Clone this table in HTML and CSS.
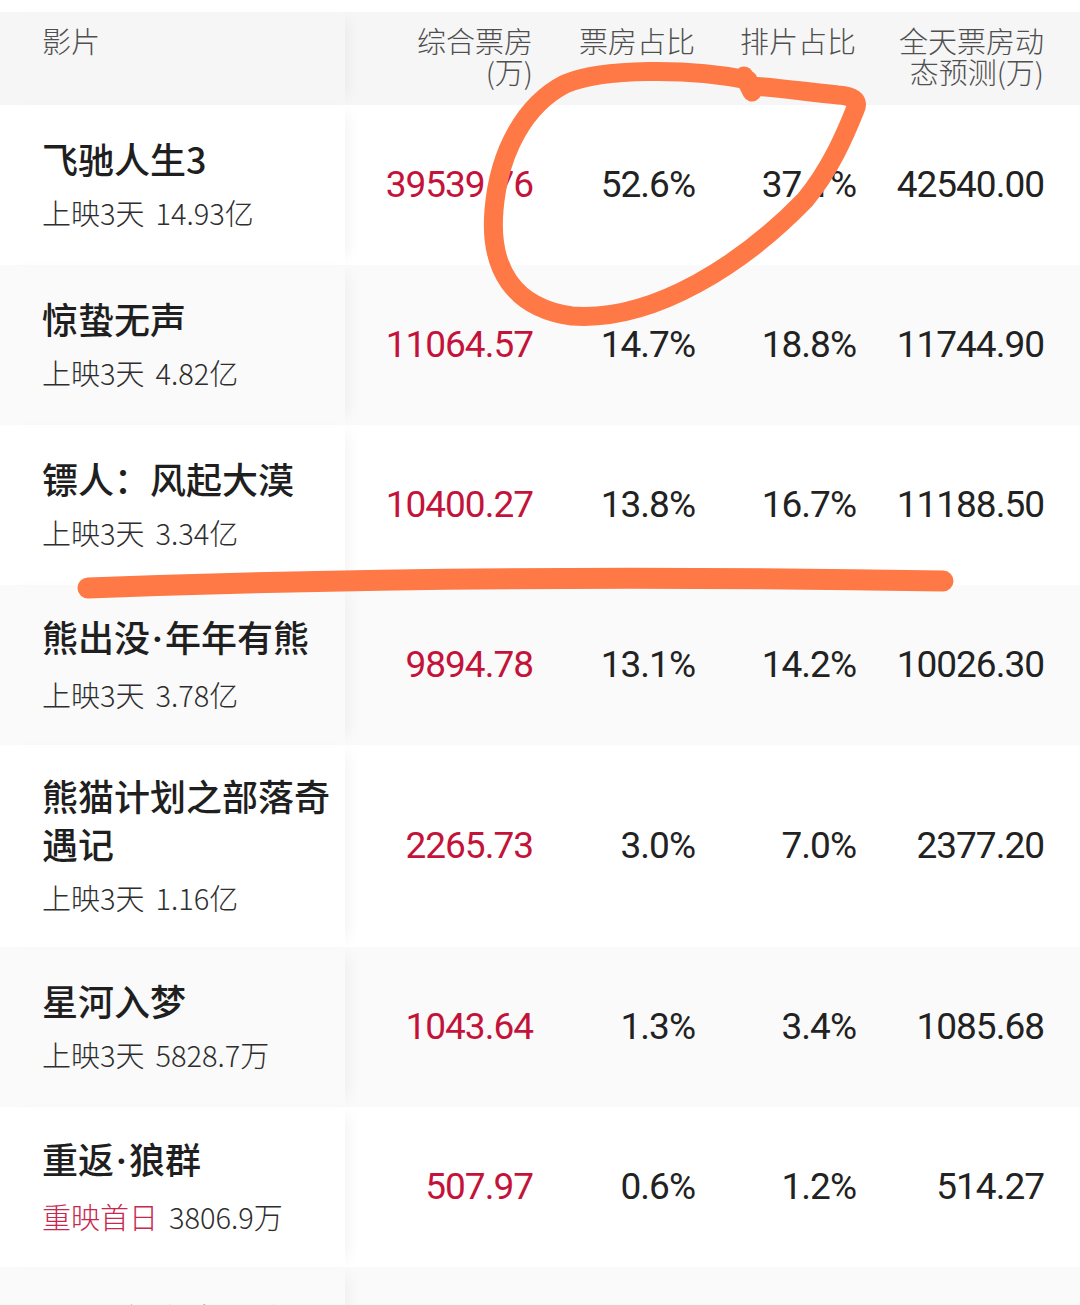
FILE: index.html
```html
<!DOCTYPE html>
<html lang="zh-CN">
<head>
<meta charset="utf-8">
<title>票房</title>
<link rel="stylesheet" href="styles.css">
</head>
<body>
<div class="board">
  <div class="row head">
    <div class="film">影片</div>
    <div class="hcell">综合票房<br>(万)</div>
    <div class="hcell">票房占比</div>
    <div class="hcell">排片占比</div>
    <div class="hcell">全天票房动<br>态预测(万)</div>
  </div>

  <div class="row">
    <div class="film"><div class="title">飞驰人生3</div><div class="sub"><span>上映3天</span><span>14.93亿</span></div></div>
    <div class="num red">39539.76</div>
    <div class="num">52.6%</div>
    <div class="num">37.1%</div>
    <div class="num">42540.00</div>
  </div>

  <div class="row alt">
    <div class="film"><div class="title">惊蛰无声</div><div class="sub"><span>上映3天</span><span>4.82亿</span></div></div>
    <div class="num red">11064.57</div>
    <div class="num">14.7%</div>
    <div class="num">18.8%</div>
    <div class="num">11744.90</div>
  </div>

  <div class="row">
    <div class="film"><div class="title">镖人：风起大漠</div><div class="sub"><span>上映3天</span><span>3.34亿</span></div></div>
    <div class="num red">10400.27</div>
    <div class="num">13.8%</div>
    <div class="num">16.7%</div>
    <div class="num">11188.50</div>
  </div>

  <div class="row alt">
    <div class="film"><div class="title">熊出没<span class="dot">·</span>年年有熊</div><div class="sub"><span>上映3天</span><span>3.78亿</span></div></div>
    <div class="num red">9894.78</div>
    <div class="num">13.1%</div>
    <div class="num">14.2%</div>
    <div class="num">10026.30</div>
  </div>

  <div class="row">
    <div class="film"><div class="title">熊猫计划之部落奇遇记</div><div class="sub"><span>上映3天</span><span>1.16亿</span></div></div>
    <div class="num red">2265.73</div>
    <div class="num">3.0%</div>
    <div class="num">7.0%</div>
    <div class="num">2377.20</div>
  </div>

  <div class="row alt">
    <div class="film"><div class="title">星河入梦</div><div class="sub"><span>上映3天</span><span>5828.7万</span></div></div>
    <div class="num red">1043.64</div>
    <div class="num">1.3%</div>
    <div class="num">3.4%</div>
    <div class="num">1085.68</div>
  </div>

  <div class="row">
    <div class="film"><div class="title">重返<span class="dot">·</span>狼群</div><div class="sub"><span class="rerun">重映首日</span><span>3806.9万</span></div></div>
    <div class="num red">507.97</div>
    <div class="num">0.6%</div>
    <div class="num">1.2%</div>
    <div class="num">514.27</div>
  </div>

  <div class="row alt">
    <div class="film"><div class="title">哪吒之魔童闹海</div><div class="sub"><span>上映3天</span><span>2140.5万</span></div></div>
    <div class="num red">412.36</div>
    <div class="num">0.5%</div>
    <div class="num">1.0%</div>
    <div class="num">425.10</div>
  </div>

  <svg class="marks" viewBox="0 0 1080 1305" width="1080" height="1305" aria-hidden="true">
    <path d="M748 80 C 690 68, 602 68, 565 84 C 526 104, 499 150, 494 210 C 489 268, 513 308, 572 316 C 655 322, 745 262, 805 200 C 830 170, 845 135, 855 110 C 860 100, 852 96, 838 95 C 808 92, 780 88, 752 86" />
    <path d="M744 76 L 752 92" />
    <path class="line" d="M88 588 Q 480 573 943 581" />
  </svg>
</div>
</body>
</html>
```

FILE: styles.css
```css
html, body {
  margin: 0;
  padding: 0;
  background: #ffffff;
}

body {
  font-family: "Noto Sans CJK SC", "Noto Sans", sans-serif;
  color: #222222;
}

.board {
  position: relative;
  width: 1080px;
  height: 1305px;
  padding-top: 12px;
  box-sizing: border-box;
  overflow: hidden;
}

.row {
  display: grid;
  grid-template-columns: 345px 188px 162px 161px 188px;
  min-height: 160px;
  align-items: center;
  background: #ffffff;
}

.row.alt {
  background: #fafafa;
}

.row.head {
  min-height: 93px;
  align-items: start;
  background: #f6f6f6;
}

.film {
  align-self: stretch;
  display: flex;
  flex-direction: column;
  justify-content: center;
  padding: 26px 10px 26px 42px;
  box-shadow: 10px 0 14px -8px rgba(0, 0, 0, 0.06);
  position: relative;
  z-index: 1;
}

.head .film,
.hcell {
  justify-content: flex-start;
  padding-top: 13px;
  padding-bottom: 0;
  font-size: 29px;
  line-height: 31px;
  font-weight: 300;
  color: #4f4f4f;
}

.hcell {
  text-align: right;
}

.title {
  font-size: 36px;
  line-height: 48px;
  font-weight: 500;
  color: #1f1f1f;
}

.title .dot {
  font-family: Roboto, "Liberation Sans", sans-serif;
  font-weight: 700;
  padding: 0 2px;
}

.sub {
  display: flex;
  gap: 11px;
  margin-top: 6px;
  font-size: 29px;
  line-height: 48px;
  font-weight: 300;
  color: #2e2e2e;
}

.sub .rerun {
  color: #c8284e;
}

.num {
  text-align: right;
  font-family: Roboto, "Liberation Sans", sans-serif;
  font-size: 37px;
  line-height: 44px;
  letter-spacing: -1px;
  color: #222222;
}

.num.red {
  color: #c4133a;
}

.marks {
  position: absolute;
  left: 0;
  top: 0;
  pointer-events: none;
  z-index: 5;
}

.marks path {
  fill: none;
  stroke: #fe7945;
  stroke-width: 19;
  stroke-linecap: round;
  stroke-linejoin: round;
}

.marks .line {
  stroke-width: 21;
}
```
